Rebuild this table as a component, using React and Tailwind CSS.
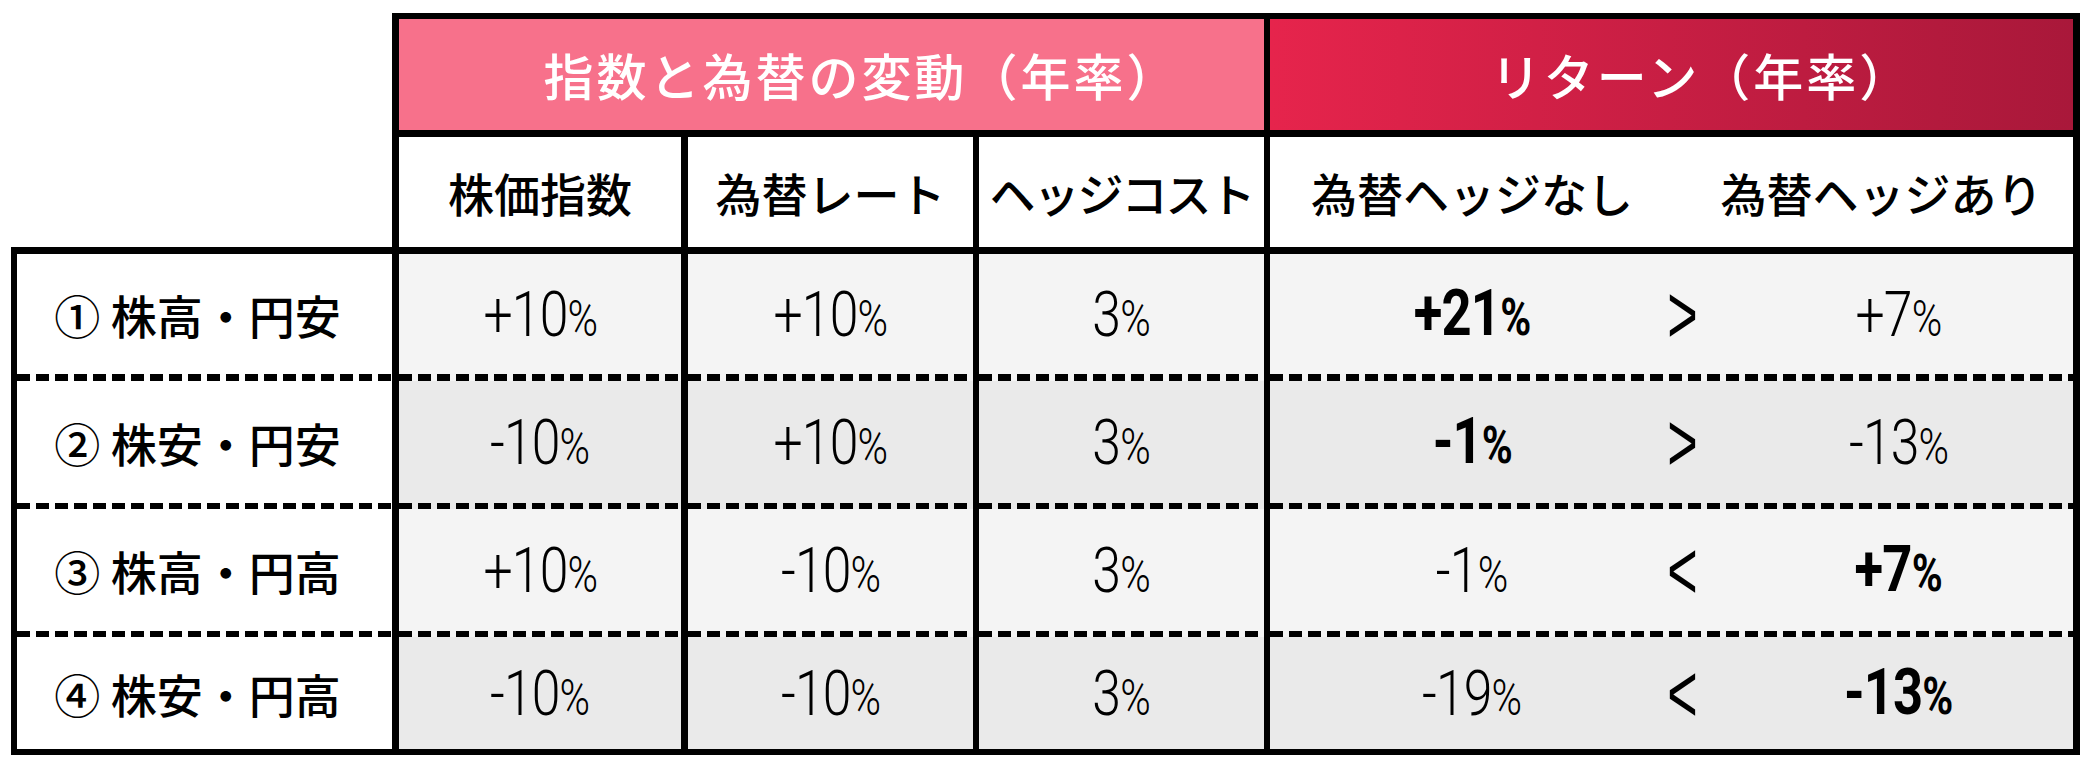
import React from "react";

const JP = "font-['Noto_Sans_CJK_JP',sans-serif]";
const DASH = "h-[7px] w-full bg-[image:repeating-linear-gradient(90deg,#000_0px,#000_13px,transparent_13px,transparent_19px)]";
const DASH6 = "h-[6px] w-full bg-[image:repeating-linear-gradient(90deg,#000_0px,#000_13px,transparent_13px,transparent_19px)]";

function Pct({ v, bold }) {
  return (
    <span
      className={
        "inline-block scale-x-[0.82] font-['Roboto',sans-serif] leading-none text-black tracking-[-1px] " +
        (bold ? "font-bold text-[64px]" : "font-light text-[63px]")
      }
    >
      {v}
      <span className="text-[0.8em]">%</span>
    </span>
  );
}

function Cmp({ c }) {
  return (
    <span className="inline-block scale-x-[0.62] font-['Liberation_Sans',sans-serif] text-[84px] leading-none text-black">
      {c}
    </span>
  );
}

const rows = [
  { label: "① 株高・円安", a: "+10", b: "+10", c: "3", r1: "+21", r1b: true, cmp: ">", r2: "+7", r2b: false, bg: "bg-[#f4f4f4]", h: "h-[127px]", dash: DASH },
  { label: "② 株安・円安", a: "-10", b: "+10", c: "3", r1: "-1", r1b: true, cmp: ">", r2: "-13", r2b: false, bg: "bg-[#eaeaea]", h: "h-[128px]", dash: DASH6 },
  { label: "③ 株高・円高", a: "+10", b: "-10", c: "3", r1: "-1", r1b: false, cmp: "<", r2: "+7", r2b: true, bg: "bg-[#f4f4f4]", h: "h-[128px]", dash: DASH6 },
  { label: "④ 株安・円高", a: "-10", b: "-10", c: "3", r1: "-19", r1b: false, cmp: "<", r2: "-13", r2b: true, bg: "bg-[#eaeaea]", h: "h-[118px]", dash: null },
];

function Cell({ className, children, dash, last }) {
  return (
    <div className={"flex flex-col border-black " + (last ? "border-b-[6px] " : "") + className}>
      <div className="flex flex-1 items-center justify-center">{children}</div>
      {dash && <div className={dash} />}
    </div>
  );
}

export default function App() {
  return (
    <div className="w-[2096px] h-[770px] bg-white pt-[13px] pl-[11px]">
      {/* header block */}
      <div className="ml-[381px] w-[1688px] border-t-[6px] border-x-[7px] border-black">
        <div className="flex h-[111px]">
          <div className={"flex w-[865px] items-center justify-center bg-[#f7718b] pl-[60px] text-[50px] font-medium tracking-[3px] text-white " + JP}>
            指数と為替の変動（年率）
          </div>
          <div className={"flex w-[809px] items-center justify-center border-l-[6px] border-black bg-linear-to-r from-[#e6244c] to-[#a9183a] pl-[60px] text-[50px] font-medium tracking-[3px] text-white " + JP}>
            リターン（年率）
          </div>
        </div>
        <div className={"flex h-[117px] border-t-[7px] border-black bg-white text-[46px] font-medium text-black " + JP}>
          <div className="flex w-[282px] items-center justify-center">株価指数</div>
          <div className="flex w-[292px] items-center justify-center border-l-[7px] border-black">為替レート</div>
          <div className="flex w-[291px] items-center justify-center border-l-[6px] border-black tracking-[-2px]">ヘッジコスト</div>
          <div className="flex w-[809px] border-l-[6px] border-black">
            <div className="flex w-[404px] items-center justify-center">為替ヘッジなし</div>
            <div className="flex flex-1 items-center justify-center pl-[16px]">為替ヘッジあり</div>
          </div>
        </div>
      </div>

      {/* body */}
      <div className="w-[2069px] border-t-[7px] border-black">
        {rows.map((r, i) => {
          const last = i === rows.length - 1;
          return (
            <div key={i} className={"flex " + r.h}>
              <Cell className="w-[381px] border-l-[6px] bg-white" dash={r.dash} last={last}>
                <span className={"pr-[14px] text-[46px] font-medium leading-none text-black " + JP}>{r.label}</span>
              </Cell>
              <Cell className={"w-[289px] border-l-[7px] " + r.bg} dash={r.dash} last={last}>
                <Pct v={r.a} />
              </Cell>
              <Cell className={"w-[292px] border-l-[7px] " + r.bg} dash={r.dash} last={last}>
                <Pct v={r.b} />
              </Cell>
              <Cell className={"w-[291px] border-l-[6px] " + r.bg} dash={r.dash} last={last}>
                <Pct v={r.c} />
              </Cell>
              <div className={"flex w-[816px] flex-col border-x-[6px] border-r-[7px] border-black " + r.bg + (last ? " border-b-[6px]" : "")}>
                <div className="flex flex-1 items-center">
                  <div className="flex w-[404px] justify-center">
                    <Pct v={r.r1} bold={r.r1b} />
                  </div>
                  <div className="flex w-[18px] justify-center">
                    <Cmp c={r.cmp} />
                  </div>
                  <div className="flex flex-1 justify-center pl-[32px]">
                    <Pct v={r.r2} bold={r.r2b} />
                  </div>
                </div>
                {r.dash && <div className={r.dash} />}
              </div>
            </div>
          );
        })}
      </div>
    </div>
  );
}
